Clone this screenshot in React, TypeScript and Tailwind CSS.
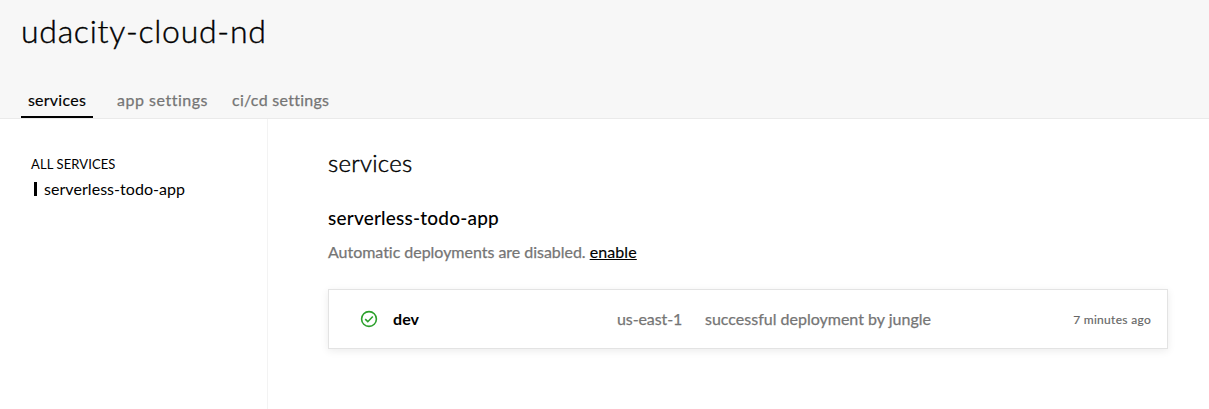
function SuccessIcon() {
  return (
    <svg viewBox="0 0 18 18" className="size-[18px] shrink-0" fill="none" stroke="#2ca02c" strokeWidth="1.6">
      <circle cx="9" cy="9" r="7.4" />
      <path d="M5.2 9.2l2.6 2.5 5-5.2" />
    </svg>
  );
}

export default function App() {
  return (
    <div className="flex h-[409px] w-full flex-col overflow-hidden bg-white font-['Lato',sans-serif] text-base leading-6 text-black [font-variant-ligatures:none]">
      <header className="flex h-[119px] shrink-0 flex-col justify-between border-b border-[#eaeaea] bg-[#f7f7f7] pl-[21px]">
        <h1 className="pt-[11px] text-[32px] leading-10 font-light tracking-[0.72px] [-webkit-text-stroke:0.4px_black]">udacity-cloud-nd</h1>
        <nav className="flex">
          <a className="mr-6 h-[30px] w-[72px] border-b-2 border-black text-center tracking-[0.25px] [-webkit-text-stroke:0.15px_black]">services</a>
          <a className="mr-6 tracking-[0.52px] text-[#757575] [-webkit-text-stroke:0.25px_#757575]">app settings</a>
          <a className="tracking-[0.28px] text-[#757575] [-webkit-text-stroke:0.25px_#757575]">ci/cd settings</a>
        </nav>
      </header>
      <div className="flex min-h-0 flex-1">
        <aside className="w-[268px] shrink-0 border-r border-[#f3f3f3] pt-[34px] pl-[31px]">
          <p className="text-[13px] leading-[22px] tracking-[0.1px]">ALL SERVICES</p>
          <div className="mt-[2px] flex items-center pl-[3px]">
            <span className="mr-[7px] h-[14px] w-[3px] bg-black" />
            <span className="tracking-[0.05px]">serverless-todo-app</span>
          </div>
        </aside>
        <main className="flex-1 pt-[29px] pr-[41px] pl-[60px]">
          <h2 className="text-2xl leading-[30px] font-light tracking-[0.25px] [-webkit-text-stroke:0.45px_black]">services</h2>
          <h3 className="mt-[26px] text-[19px] leading-7 font-medium tracking-[0.2px]">serverless-todo-app</h3>
          <p className="mt-[8px] tracking-[-0.03px] text-[#757575] [-webkit-text-stroke:0.25px_#757575]">
            Automatic deployments are disabled. <a className="tracking-[0.1px] text-black underline [-webkit-text-stroke:0.15px_black]">enable</a>
          </p>
          <section className="mt-[25px] flex h-[60px] w-[840px] items-center border border-[#e3e3e3] pr-4 pl-[31px] shadow-[0_2px_8px_rgba(0,0,0,0.08)]">
            <SuccessIcon />
            <span className="ml-[15px] w-[224px] font-bold tracking-[0.1px]">dev</span>
            <span className="w-[88px] tracking-[-0.1px] text-[#757575] [-webkit-text-stroke:0.25px_#757575]">us-east-1</span>
            <span className="text-[#757575] [-webkit-text-stroke:0.25px_#757575]">successful deployment by jungle</span>
            <span className="mt-px ml-auto text-[12px] tracking-[0.3px] text-[#666] [-webkit-text-stroke:0.15px_#666]">7 minutes ago</span>
          </section>
        </main>
      </div>
    </div>
  );
}
